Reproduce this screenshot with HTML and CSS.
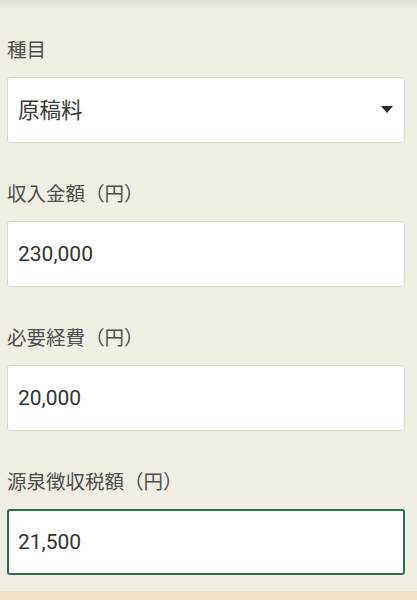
FILE: index.html
```html
<!DOCTYPE html>
<html lang="ja">
<head>
<meta charset="utf-8">
<link rel="stylesheet" href="styles.css">
</head>
<body>
<div class="page">
  <div class="field">
    <div class="label">種目</div>
    <div class="box select">
      <span class="value jp">原稿料</span>
      <svg class="caret" width="12" height="7" viewBox="0 0 12 7"><path d="M0 0H12L6 7Z" fill="#2b2b2b"/></svg>
    </div>
  </div>
  <div class="field">
    <div class="label">収入金額（円）</div>
    <div class="box"><span class="value">230,000</span></div>
  </div>
  <div class="field">
    <div class="label">必要経費（円）</div>
    <div class="box"><span class="value">20,000</span></div>
  </div>
  <div class="field">
    <div class="label">源泉徴収税額（円）</div>
    <div class="box focused"><span class="value">21,500</span></div>
  </div>
</div>
<div class="strip"></div>
</body>
</html>
```
FILE: styles.css
```css
html, body {
  margin: 0;
  padding: 0;
  height: 100%;
}
body {
  background: #f1eee3;
  font-family: Roboto, "Noto Sans CJK JP", sans-serif;
  color: #333;
  overflow: hidden;
  position: relative;
}
.page {
  background: linear-gradient(to bottom, rgba(0,0,0,0.07), rgba(0,0,0,0) 9px);
  padding: 37px 12px 0 7px;
}
.field {
  margin-bottom: 38.3px;
}
.label {
  font-family: "Noto Sans CJK JP", sans-serif;
  font-size: 19.5px;
  line-height: 24px;
  color: #4e4e4e;
  margin-bottom: 16px;
}
.box {
  height: 65.7px;
  box-sizing: border-box;
  background: #fff;
  border: 1px solid #dcd8cc;
  border-radius: 3px;
  display: flex;
  align-items: center;
  padding: 0 10px;
}
.box.focused {
  border: 2px solid #2d6e4e;
  padding: 0 9px;
}
.value {
  font-size: 21px;
  color: #333;
  padding-top: 1px;
}
.value.jp {
  font-family: "Noto Sans CJK JP", sans-serif;
  font-size: 21.5px;
  color: #3a3a3a;
  padding-top: 0;
  padding-bottom: 2px;
}
.select {
  justify-content: space-between;
  padding-right: 11px;
}
.caret {
  display: block;
}
.strip {
  position: absolute;
  left: 0;
  right: 0;
  top: 591px;
  height: 9px;
  background: #efe3c3;
}
```
